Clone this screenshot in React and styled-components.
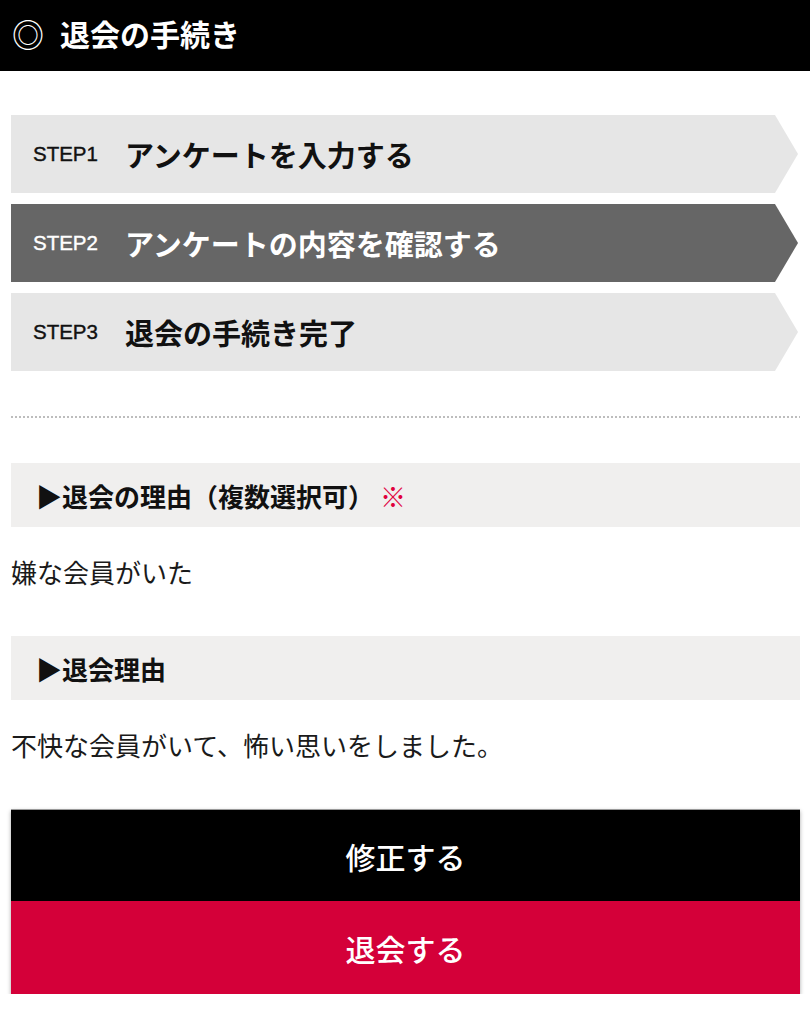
import React from 'react';
import styled, { createGlobalStyle } from 'styled-components';

const GlobalStyle = createGlobalStyle`
  body {
    margin: 0;
    background: #fff;
    font-family: "Noto Sans CJK JP", "Noto Sans", sans-serif;
    color: #111;
  }
`;

const Page = styled.div`
  width: 810px;
`;

const Header = styled.header`
  height: 71px;
  background: #000;
  color: #fff;
  display: flex;
  align-items: center;
  padding: 0 12px 6px;
  font-size: 30px;
  font-weight: 700;
  box-sizing: border-box;
`;

const Mark = styled.span`
  font-weight: 400;
  font-size: 32px;
  margin-right: 16px;
`;

const Main = styled.main`
  padding: 44px 10px 0 11px;
`;

const StepList = styled.ol`
  list-style: none;
  margin: 0;
  padding: 0;
  display: flex;
  flex-direction: column;
  gap: 11px;
  width: 787px;
`;

const Step = styled.li`
  height: 78px;
  display: flex;
  align-items: center;
  gap: 27px;
  padding-left: 22px;
  background: ${({ $active }) => ($active ? '#666666' : '#e6e6e6')};
  color: ${({ $active }) => ($active ? '#fff' : '#111')};
  clip-path: polygon(0 0, calc(100% - 23px) 0, 100% 50%, calc(100% - 23px) 100%, 0 100%);
`;

const StepNo = styled.span`
  font-family: "Liberation Sans", Arial, sans-serif;
  font-size: 20.5px;
  -webkit-text-stroke: 0.4px currentColor;
`;

const StepTitle = styled.span`
  font-size: 29px;
  font-weight: 600;
`;

const Divider = styled.hr`
  border: 0;
  margin: 45px 0 45px;
  height: 2px;
  background-image: repeating-linear-gradient(to right, #bdbdbd 0 2px, transparent 2px 4px);
`;

const Section = styled.section``;

const Heading = styled.h2`
  margin: 0;
  height: 64px;
  display: flex;
  align-items: center;
  padding-left: 25px;
  background: #f0efee;
  font-size: 26px;
  font-weight: 700;
`;

const Required = styled.span`
  color: #e0003c;
  font-weight: 400;
  margin-left: 6px;
`;

const Answer = styled.p`
  margin: 0;
  padding: 25px 0 45px;
  font-size: 26px;
  line-height: 39px;
  color: #1a1a1a;
`;

const Actions = styled.div`
  display: flex;
  flex-direction: column;
  box-shadow: 0 2px 4px rgba(0, 0, 0, 0.35);
  border-top: 1px solid #9a9a9a;
`;

const ActionButton = styled.button`
  height: ${({ $h }) => $h}px;
  border: 0;
  background: ${({ $bg }) => $bg};
  color: #fff;
  font-family: "Noto Sans CJK JP", sans-serif;
  font-size: 30px;
  font-weight: 500;
  cursor: pointer;
`;

const steps = [
  { no: 'STEP1', title: 'アンケートを入力する' },
  { no: 'STEP2', title: 'アンケートの内容を確認する', active: true },
  { no: 'STEP3', title: '退会の手続き完了' },
];

export default function App() {
  return (
    <Page>
      <GlobalStyle />
      <Header>
        <Mark>◎</Mark>退会の手続き
      </Header>
      <Main>
        <StepList>
          {steps.map((s) => (
            <Step key={s.no} $active={s.active}>
              <StepNo>{s.no}</StepNo>
              <StepTitle>{s.title}</StepTitle>
            </Step>
          ))}
        </StepList>

        <Divider />

        <Section>
          <Heading>
            ▶退会の理由（複数選択可）<Required>※</Required>
          </Heading>
          <Answer>嫌な会員がいた</Answer>
        </Section>

        <Section>
          <Heading>▶退会理由</Heading>
          <Answer>不快な会員がいて、怖い思いをしました。</Answer>
        </Section>

        <Actions>
          <ActionButton $bg="#000" $h={91}>修正する</ActionButton>
          <ActionButton $bg="#d40039" $h={93}>退会する</ActionButton>
        </Actions>
      </Main>
    </Page>
  );
}
